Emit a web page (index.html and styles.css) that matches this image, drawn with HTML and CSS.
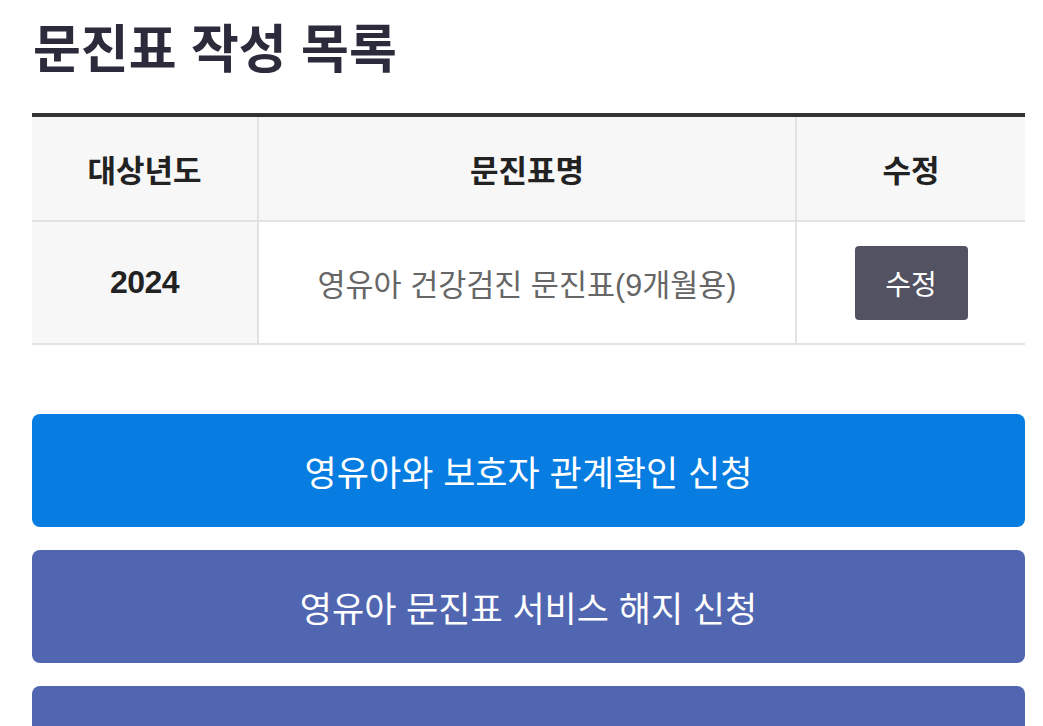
FILE: index.html
```html
<!DOCTYPE html>
<html lang="ko">
<head>
<meta charset="utf-8">
<title>문진표 작성 목록</title>
<link rel="stylesheet" href="styles.css">
</head>
<body>
<main class="page">
  <h1 class="page-title">문진표 작성 목록</h1>
  <table class="list-table">
    <colgroup>
      <col class="col-year">
      <col class="col-name">
      <col class="col-edit">
    </colgroup>
    <thead>
      <tr>
        <th>대상년도</th>
        <th>문진표명</th>
        <th>수정</th>
      </tr>
    </thead>
    <tbody>
      <tr>
        <td class="cell-year">2024</td>
        <td class="cell-name">영유아 건강검진 문진표(9개월용)</td>
        <td class="cell-edit"><button class="edit-btn" type="button">수정</button></td>
      </tr>
    </tbody>
  </table>
  <div class="actions">
    <button class="action-btn action-primary" type="button">영유아와 보호자 관계확인 신청</button>
    <button class="action-btn action-secondary" type="button">영유아 문진표 서비스 해지 신청</button>
    <button class="action-btn action-secondary" type="button">메인으로 이동</button>
  </div>
</main>
</body>
</html>
```
FILE: styles.css
```css
* { box-sizing: border-box; }

html, body {
  margin: 0;
  padding: 0;
  background: #ffffff;
}

body {
  font-family: "Liberation Sans", "Noto Sans CJK KR", sans-serif;
  color: #222222;
}

.page {
  padding: 0 18px 0 32px;
}

.page-title {
  margin: 0 0 13px 0;
  height: 100px;
  line-height: 100px;
  font-size: 52px;
  font-weight: 700;
  color: #2b2b3b;
  letter-spacing: 0;
  padding-left: 1px;
}

.list-table {
  width: 100%;
  table-layout: fixed;
  border-collapse: separate;
  border-spacing: 0;
  border-top: 4px solid #333333;
}

.col-year { width: 227px; }
.col-edit { width: 228px; }

.list-table th,
.list-table td {
  padding: 0;
  text-align: center;
  vertical-align: middle;
  border-bottom: 2px solid #e2e2e2;
  border-right: 2px solid #e2e2e2;
}

.list-table th:last-child,
.list-table td:last-child {
  border-right: 0;
}

.list-table th {
  height: 105px;
  background: #f7f7f7;
  font-size: 31px;
  font-weight: 700;
  color: #222222;
  letter-spacing: 0;
}

.list-table td {
  height: 123px;
  background: #ffffff;
}

.list-table td.cell-year {
  background: #f7f7f7;
  font-size: 32px;
  font-weight: 700;
  color: #222222;
  letter-spacing: -0.5px;
}

.cell-name {
  font-size: 30.5px;
  color: #666666;
  letter-spacing: 0;
}

.edit-btn {
  width: 113px;
  height: 74px;
  border: 0;
  border-radius: 4px;
  background: #525262;
  color: #ffffff;
  font-family: inherit;
  font-size: 28px;
  letter-spacing: 0;
  padding: 0;
  cursor: pointer;
}

.actions {
  display: flex;
  flex-direction: column;
  gap: 23px;
  margin-top: 69px;
}

.action-btn {
  display: block;
  width: 100%;
  height: 113px;
  border: 0;
  border-radius: 8px;
  color: #ffffff;
  font-family: inherit;
  font-size: 35px;
  letter-spacing: 0;
  padding: 0;
  cursor: pointer;
}

.action-primary { background: #077ce1; }
.action-secondary { background: #5166b0; }
```
